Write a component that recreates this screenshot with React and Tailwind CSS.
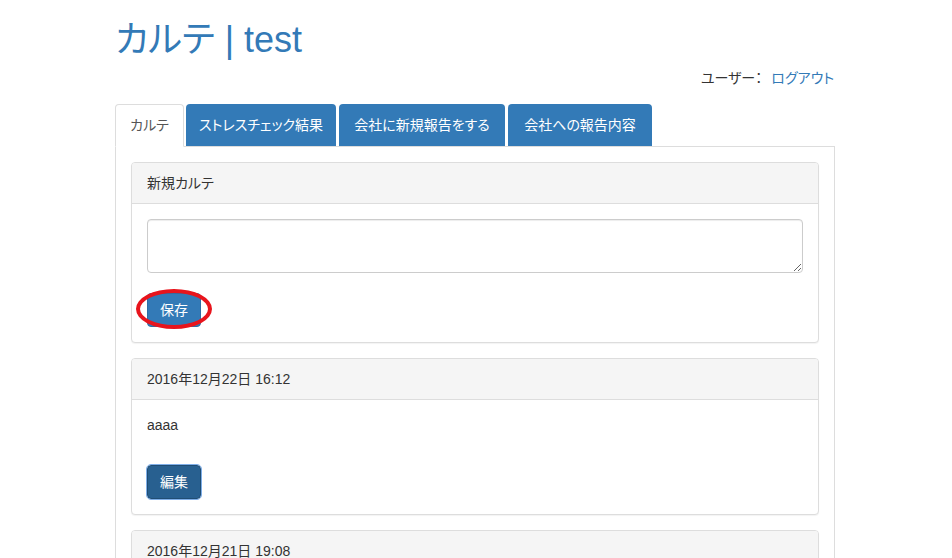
import React from 'react';

const font = "font-['Liberation_Sans','Noto_Sans_CJK_JP',sans-serif] [font-feature-settings:'palt']";

function Panel({ title, children }) {
  return (
    <div className="mb-[15px] border border-[#ddd] rounded-[4px] bg-white shadow-[0_1px_1px_rgba(0,0,0,0.05)]">
      <div className="px-[15px] py-[10px] bg-[#f5f5f5] border-b border-[#ddd] rounded-t-[3px] leading-[20px] text-[#333]">
        {title}
      </div>
      <div className="p-[15px]">{children}</div>
    </div>
  );
}

export default function App() {
  const tabs = [
    { label: 'カルテ', w: 'w-[69px]', active: true },
    { label: 'ストレスチェック結果', w: 'w-[150px]' },
    { label: '会社に新規報告をする', w: 'w-[166px]' },
    { label: '会社への報告内容', w: 'w-[144px]' },
  ];

  return (
    <div className={`${font} text-[14px] leading-[20px] text-[#333] bg-white h-[558px] overflow-hidden`}>
      <div className="w-[750px] ml-[100px] px-[15px]">
        <h1 className="mt-[20px] mb-[8px] text-[36px] leading-[1.1] text-[#337ab7]">カルテ | test</h1>

        <div className="flex justify-end mb-[16px]">
          <span>ユーザー：</span>
          <a className="ml-[9px] mr-[1px] text-[#337ab7]">ログアウト</a>
        </div>

        <div className="flex border-b border-[#ddd]">
          {tabs.map((t) => (
            <div
              key={t.label}
              className={
                t.active
                  ? `${t.w} mr-[2px] -mb-px py-[10px] text-center whitespace-nowrap bg-white border border-[#ddd] border-b-transparent rounded-t-[4px] text-[#555]`
                  : `${t.w} mr-[3px] py-[11px] text-center whitespace-nowrap bg-[#337ab7] rounded-t-[4px] text-white`
              }
            >
              {t.label}
            </div>
          ))}
        </div>

        <div className="border-x border-[#ddd] px-[15px] pt-[15px] pb-[15px]">
          <Panel title="新規カルテ">
            <textarea className="block w-full h-[54px] border border-[#ccc] rounded-[4px] shadow-[inset_0_1px_1px_rgba(0,0,0,0.075)] px-[12px] py-[6px] outline-none" />
            <div className="mt-[20px]">
              <span className="relative inline-block">
                <button className="block px-[12px] py-[6px] leading-[20px] text-white bg-[#337ab7] border border-[#2e6da4] rounded-[4px]">
                  保存
                </button>
                <span className="absolute left-[-11px] top-[-4px] w-[76px] h-[40px] rounded-[50%] border-[4px] border-[#e8141c]" />
              </span>
            </div>
          </Panel>

          <Panel title="2016年12月22日 16:12">
            <p className="leading-[20px]">aaaa</p>
            <div className="mt-[30px]">
              <button className="block px-[12px] py-[6px] leading-[20px] text-white bg-[#286090] border border-[#204d74] rounded-[4px] outline outline-1 outline-[#7eaee8]">
                編集
              </button>
            </div>
          </Panel>

          <Panel title="2016年12月21日 19:08">
            <p className="leading-[20px]">bbbb</p>
          </Panel>
        </div>
      </div>
    </div>
  );
}
